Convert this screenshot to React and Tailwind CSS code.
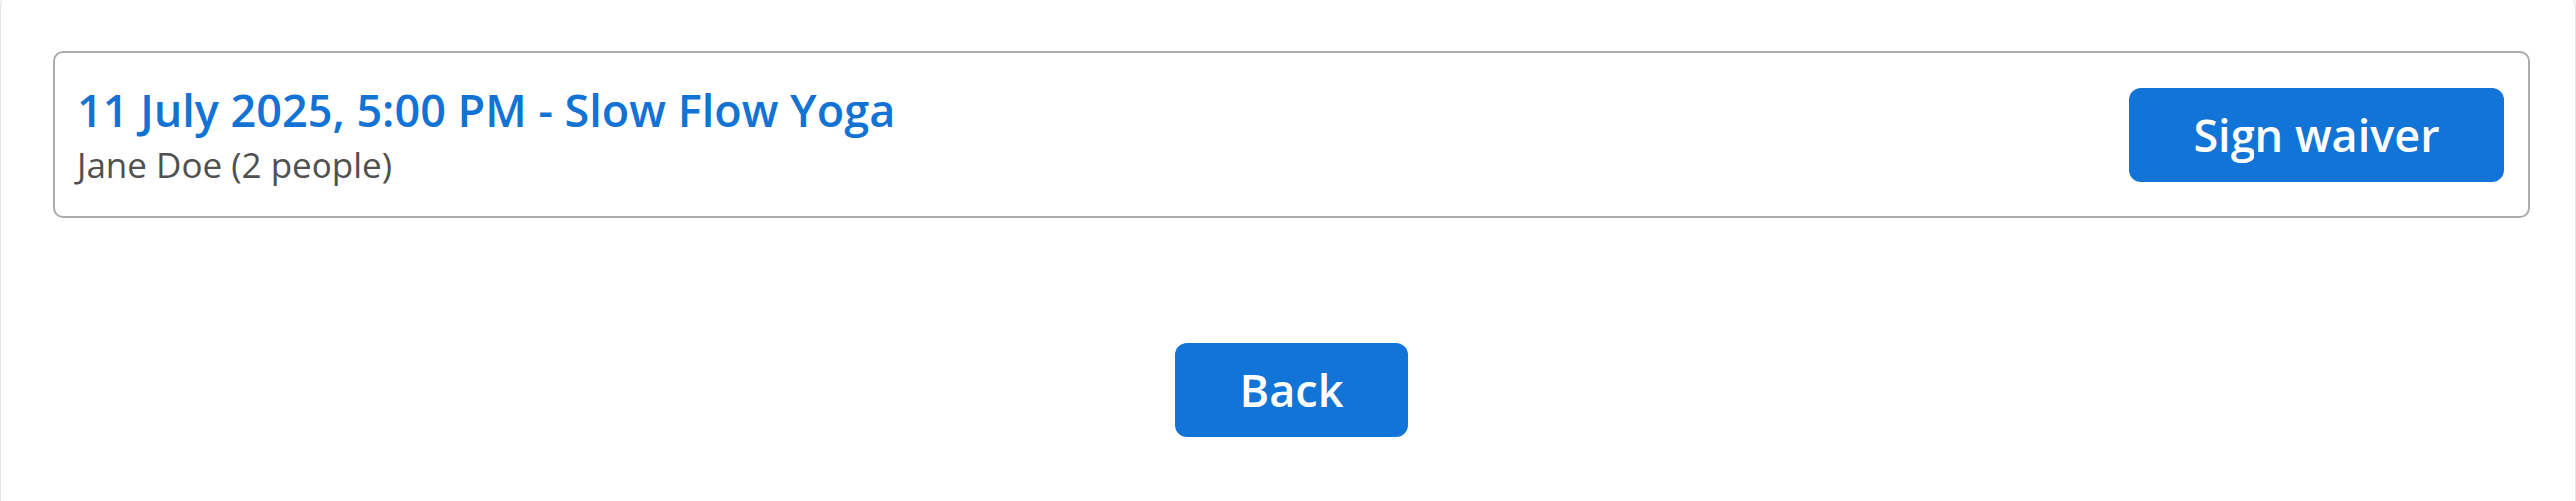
export default function App() {
  return (
    <div className="w-full h-[502px] overflow-hidden bg-white font-['Open_Sans',sans-serif]">
      <div className="-mt-[8px] h-[530px] rounded-t-[14px] border-x border-t border-[#e4e4e4] pl-[52px] pr-[45px] pt-[58px]">
        {/* booking row */}
        <div className="flex items-center justify-between rounded-[10px] border-2 border-[#ababab] pl-[22px] pr-[24px] py-[27px]">
          <div className="flex flex-col">
            <span className="text-[45px] leading-[60px] font-semibold text-[#1273d5]">
              11 July 2025, 5:00 PM - Slow Flow Yoga
            </span>
            <span className="text-[35px] leading-[49px] text-[#505050]">
              Jane Doe (2 people)
            </span>
          </div>
          <button className="w-[376px] h-[94px] rounded-[12px] bg-[#1274d6] text-white text-[45px] font-semibold">
            Sign waiver
          </button>
        </div>

        <div className="flex justify-center pt-[126px]">
          <button className="w-[233px] h-[94px] rounded-[12px] bg-[#1274d6] text-white text-[45px] font-semibold">
            Back
          </button>
        </div>
      </div>
    </div>
  );
}
